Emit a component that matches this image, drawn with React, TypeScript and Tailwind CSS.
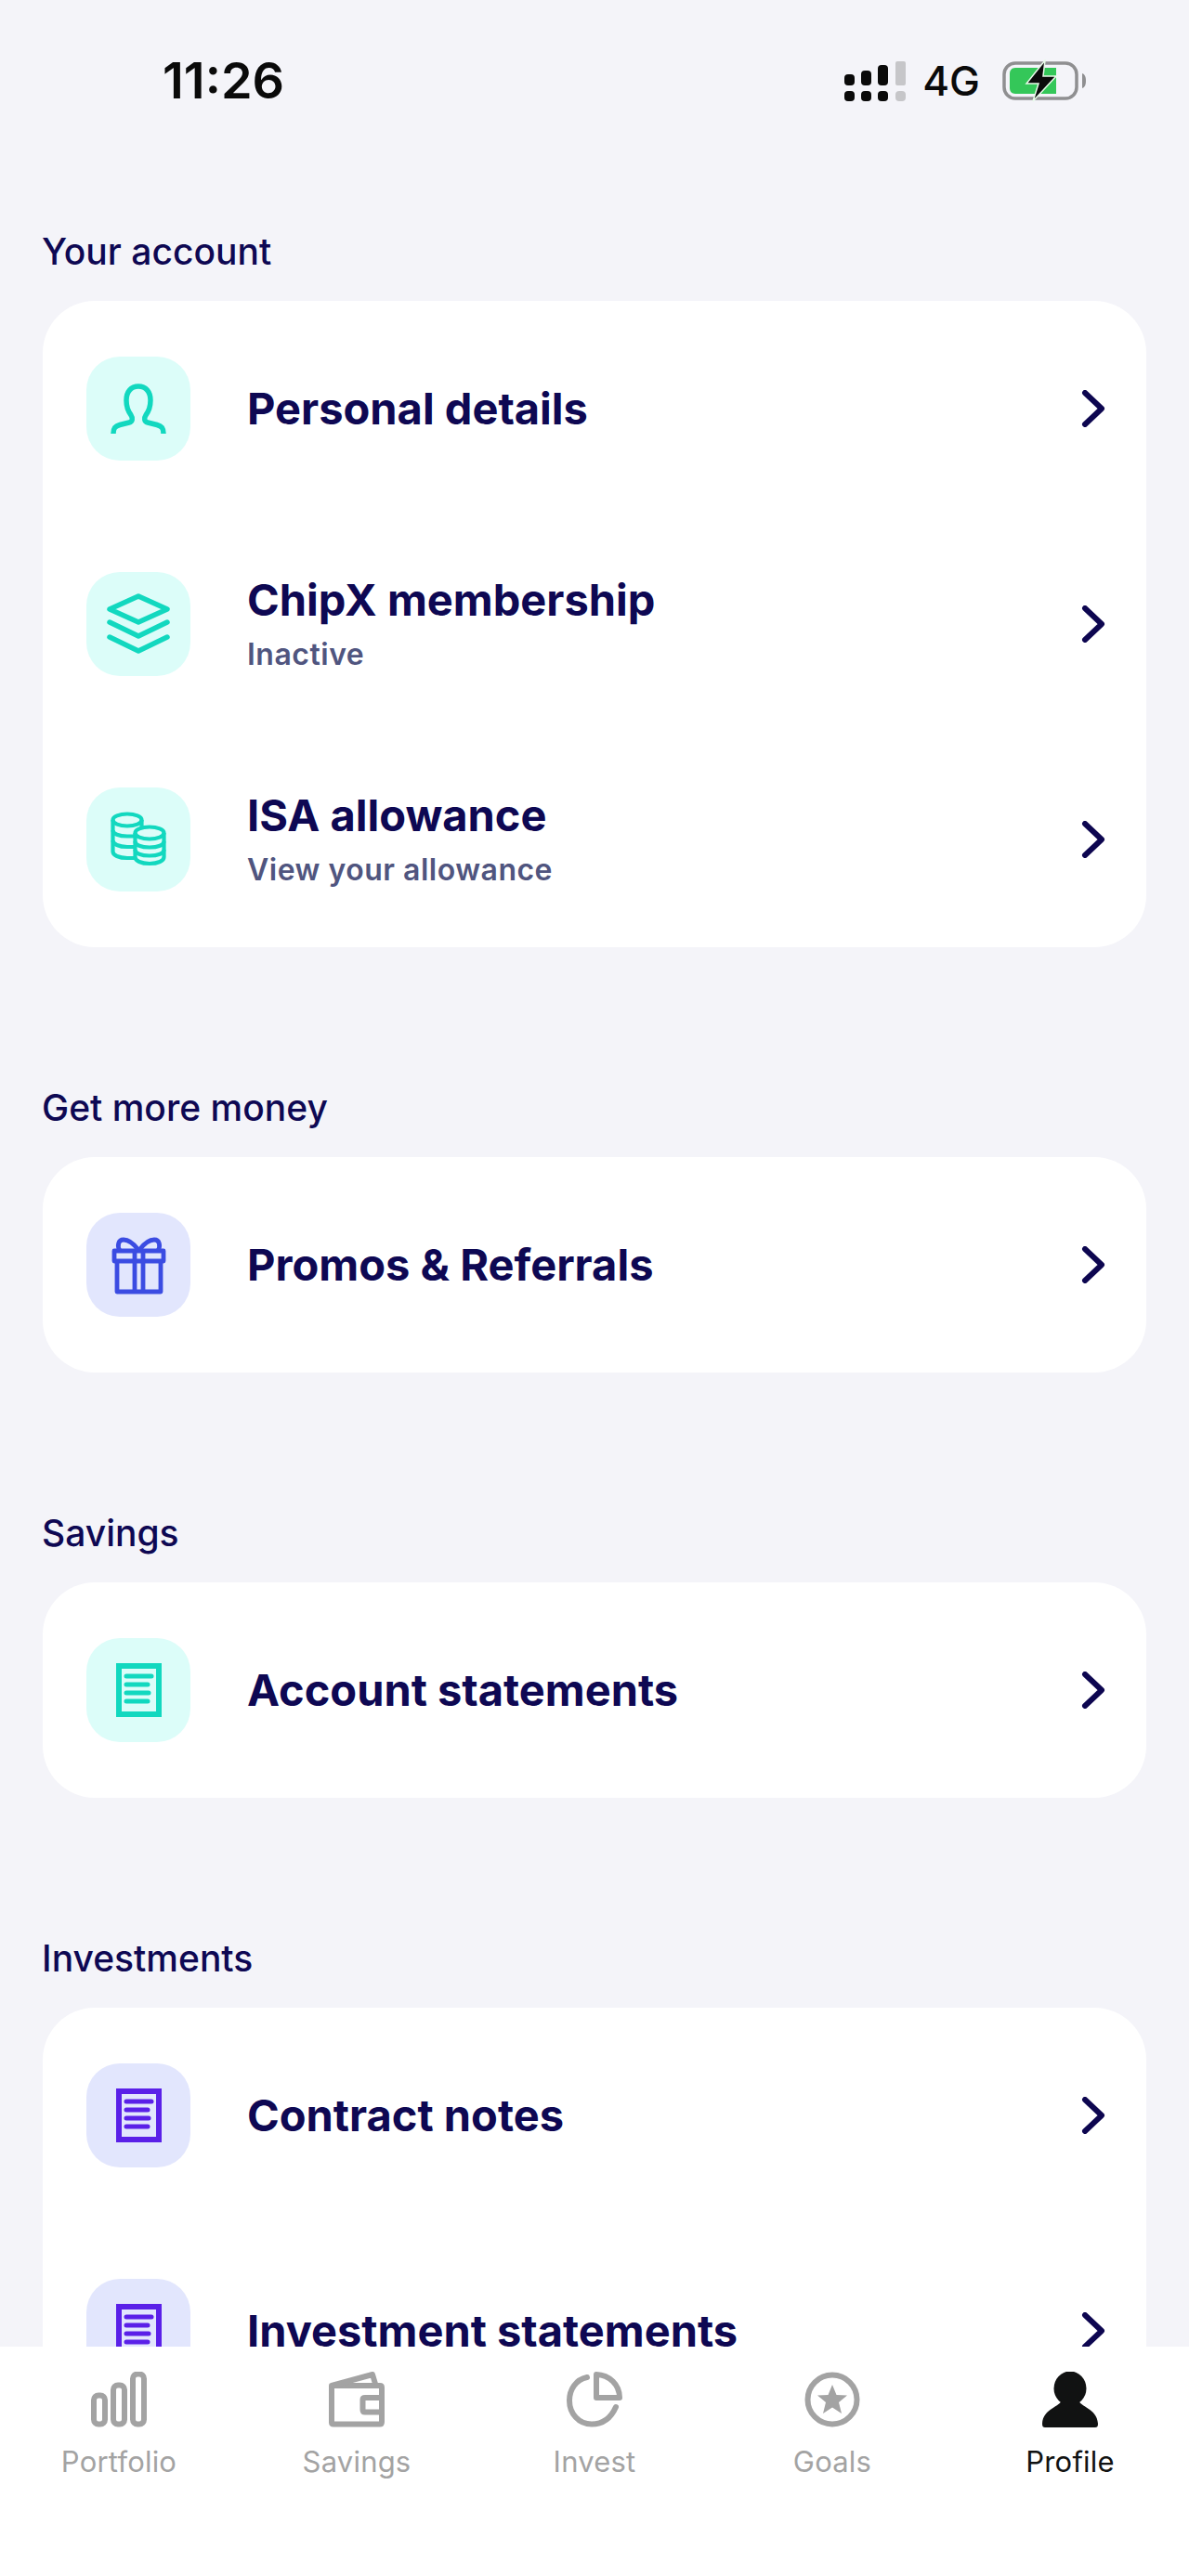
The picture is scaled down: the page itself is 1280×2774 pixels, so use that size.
import React from 'react';

const TEAL = '#12d8bf';
const INDIGO = '#3b4ce2';
const PURPLE = '#5a20e8';

function PersonIcon() {
    return (
        <svg viewBox="0 0 112 112" className="w-full h-full" fill="none" stroke={TEAL} strokeWidth="5.5">
            <path d="M29 83 C29 77 31 75 36 73.5 L46 71 C50 70 50 66 48 63 C45 59 43 54 43 47 C43 38 48 32 56 32 C64 32 69 38 69 47 C69 54 67 59 64 63 C62 66 62 70 66 71 L76 73.5 C81 75 83 77 83 83" />
        </svg>
    );
}

function LayersIcon() {
    return (
        <svg viewBox="0 0 112 112" className="w-full h-full" fill="none" stroke={TEAL} strokeWidth="5.5" strokeLinecap="round" strokeLinejoin="round">
            <path d="M56 26 L87 40 L56 54 L25 40 Z" />
            <path d="M25 54 L56 69 L87 54" />
            <path d="M25 70 L56 85 L87 70" />
        </svg>
    );
}

function CoinsIcon() {
    return (
        <svg viewBox="0 0 112 112" className="w-full h-full" fill="none" stroke={TEAL} strokeWidth="4.2">
            <ellipse cx="44" cy="35" rx="15.5" ry="6.5" />
            <path d="M28.5 35 V69 C28.5 73 35 76 44 76 H52" />
            <path d="M28.5 46 C28.5 50 35 52.5 44 52.5 H52" />
            <path d="M28.5 57 C28.5 61 35 64 44 64 H52" />
            <path d="M59.5 35 V43" />
            <ellipse cx="68" cy="49" rx="15.5" ry="6.5" />
            <path d="M52.5 49 V75 C52.5 79 59 82 68 82 C77 82 83.5 79 83.5 75 V49" />
            <path d="M52.5 58 C52.5 62 59 64.500 68 64.500 C77 64.500 83.5 62 83.5 58" />
            <path d="M52.5 67 C52.5 71 59 73.500 68 73.500 C77 73.500 83.5 71 83.5 67" />
        </svg>
    );
}

function GiftIcon() {
    return (
        <svg viewBox="0 0 112 112" className="w-full h-full" fill="none" stroke={INDIGO} strokeWidth="4.8" strokeLinejoin="round">
            <rect x="30" y="41" width="53" height="11" />
            <path d="M33 52 V85 H80 V52" />
            <path d="M52 41 V85 M61 41 V85" />
            <path d="M56 40 C50 32 45 29 40 29 C34 29 33 36 36 41" />
            <path d="M57 40 C63 32 68 29 73 29 C79 29 80 36 77 41" />
        </svg>
    );
}

function DocIcon({ color }: { color: string }) {
    return (
        <svg viewBox="0 0 112 112" className="w-full h-full" fill="none" stroke={color}>
            <rect x="35" y="30" width="43" height="52" strokeWidth="6" />
            <g strokeWidth="5" strokeLinecap="round">
                <path d="M43 41 H70" />
                <path d="M43 50 H66" />
                <path d="M43 59 H67" />
                <path d="M43 68 H66" />
            </g>
        </svg>
    );
}

function Chevron() {
    return (
        <svg viewBox="0 0 26 40" className="w-[26px] h-[40px] shrink-0" fill="none" stroke="#0d0650" strokeWidth="6" strokeLinecap="round" strokeLinejoin="round">
            <path d="M4 3 L22 20 L4 37" />
        </svg>
    );
}

function StatusIcons() {
    return (
        <div className="flex items-center">
            <svg viewBox="0 0 66 44" className="w-[66px] h-[44px]" fill="#0a0a0a">
                <rect x="0" y="15" width="11" height="12" rx="4" />
                <rect x="18" y="11" width="11" height="16" rx="4" />
                <rect x="36" y="5" width="11" height="22" rx="4" />
                <rect x="55" y="1" width="11" height="26" rx="2" fill="#c6c6c9" />
                <rect x="0" y="33" width="11" height="11" rx="4" />
                <rect x="18" y="33" width="11" height="11" rx="4" />
                <rect x="36" y="33" width="11" height="11" rx="4" />
                <rect x="55" y="33" width="11" height="11" rx="4" fill="#c6c6c9" />
            </svg>
            <span className="ml-[18px] text-[44px] leading-none font-medium text-[#0a0a0a]">4G</span>
            <svg viewBox="0 0 92 46" className="ml-[24px] w-[92px] h-[46px]" fill="none">
                <rect x="2" y="4" width="78" height="38" rx="12" stroke="#8f8f91" strokeWidth="3.500" />
                <path d="M14 9 H58 V37 H14 C10 37 8 34 8 31 V15 C8 12 10 9 14 9 Z" fill="#34c759" />
                <path d="M86 15 C89 16 90 19 90 23 C90 27 89 30 86 31 Z" fill="#8f8f91" />
                <path d="M46 1 L26 26 H39 L33 45 L58 18 H44 Z" fill="#0a0a0a" stroke="#e8fbe9" strokeWidth="1.500" />
            </svg>
        </div>
    );
}

interface Item {
    title: string;
    sub?: string;
    icon: React.ReactNode;
    tone: 'teal' | 'indigo';
}

const sections: { heading: string; items: Item[] }[] = [
    {
        heading: 'Your account',
        items: [
            { title: 'Personal details', icon: <PersonIcon />, tone: 'teal' },
            { title: 'ChipX membership', sub: 'Inactive', icon: <LayersIcon />, tone: 'teal' },
            { title: 'ISA allowance', sub: 'View your allowance', icon: <CoinsIcon />, tone: 'teal' },
        ],
    },
    {
        heading: 'Get more money',
        items: [{ title: 'Promos & Referrals', icon: <GiftIcon />, tone: 'indigo' }],
    },
    {
        heading: 'Savings',
        items: [{ title: 'Account statements', icon: <DocIcon color={TEAL} />, tone: 'teal' }],
    },
    {
        heading: 'Investments',
        items: [
            { title: 'Contract notes', icon: <DocIcon color={PURPLE} />, tone: 'indigo' },
            { title: 'Investment statements', icon: <DocIcon color={PURPLE} />, tone: 'indigo' },
        ],
    },
];

function NavIcon({ name }: { name: string }) {
    if (name === 'Portfolio') {
        return (
            <svg viewBox="0 0 60 60" className="w-[60px] h-[60px]" fill="none" stroke="#a3a3a3" strokeWidth="6">
                <rect x="3" y="25.500" width="12" height="31" rx="5" />
                <rect x="24" y="14.500" width="12" height="42" rx="5" />
                <rect x="45" y="2.500" width="12" height="54" rx="5" />
            </svg>
        );
    }
    if (name === 'Savings') {
        return (
            <svg viewBox="0 0 60 60" className="w-[60px] h-[60px]" fill="none" stroke="#a3a3a3" strokeWidth="6" strokeLinejoin="round">
                <path d="M3 15 H55 C56.500 15 57 15.500 57 17 V54 C57 56 56.500 56.500 55 56.500 H5 C3.500 56.500 3 56 3 54.500 Z" />
                <path d="M3 15 L47 3 L50 13" />
                <path d="M57 28 H39 C37 28 36.500 29 36.500 30 V41 C36.500 43 37 43.500 39 43.500 H57" />
            </svg>
        );
    }
    if (name === 'Invest') {
        return (
            <svg viewBox="0 0 60 60" className="w-[60px] h-[60px]" fill="none" stroke="#a3a3a3" strokeWidth="6" strokeLinecap="round" strokeLinejoin="round">
                <path d="M32 3 V28 H57 C57 14 46 3.500 32 3 Z" />
                <path d="M22 6 C10 8.500 3 19 3 31 C3 45 13 56.500 27 56.500 C41 56.500 49 47 53 38" />
            </svg>
        );
    }
    if (name === 'Goals') {
        return (
            <svg viewBox="0 0 60 60" className="w-[60px] h-[60px]" fill="none">
                <circle cx="30" cy="30" r="26.500" stroke="#a3a3a3" strokeWidth="6" />
                <path d="M30 14 L34.500 25 L46 25.500 L37 33 L40 45 L30 38.500 L20 45 L23 33 L14 25.500 L25.500 25 Z" fill="#a3a3a3" />
            </svg>
        );
    }
    return (
        <svg viewBox="0 0 60 60" className="w-[60px] h-[60px]" fill="#111212">
            <ellipse cx="30" cy="18" rx="17.500" ry="18.500" />
            <path d="M21 30 C20 38 1 39 0 56 C0 59 1 60 3 60 H57 C59 60 60 59 60 56 C59 39 40 38 39 30 Z" />
        </svg>
    );
}

const tabs = ['Portfolio', 'Savings', 'Invest', 'Goals', 'Profile'];

export default function App() {
    return (
        <div className="flex flex-col h-[2774px] overflow-hidden bg-[#f4f4f9] font-['Inter',sans-serif]">
            <div className="flex-1 min-h-0 overflow-hidden">
                {/* Status bar */}
                <div className="flex items-center justify-between h-[174px] pl-[175px] pr-[109px]">
                    <span className="text-[54px] leading-none font-semibold text-[#0a0a0a]">11:26</span>
                    <StatusIcons />
                </div>

                <div className="pt-[71px] px-[46px] flex flex-col gap-[147px]">
                    {sections.map((section) => (
                        <section key={section.heading}>
                            <h2 className="text-[39px] leading-[51px] mb-[28px] font-medium text-[#0e0853] -ml-px">{section.heading}</h2>
                            <div className="flex flex-col gap-[120px] py-[60px] pl-[47px] pr-[44px] bg-white rounded-[56px]">
                                {section.items.map((item) => (
                                    <div key={item.title} className="flex items-center h-[112px]">
                                        <div className={`w-[112px] h-[112px] shrink-0 rounded-[36px] ${item.tone === 'teal' ? 'bg-[#dcfdf9]' : 'bg-[#e2e6fd]'}`}>
                                            {item.icon}
                                        </div>
                                        <div className="flex-1 ml-[61px]">
                                            <div className="text-[47px] leading-[66px] font-bold text-[#0e0853]">{item.title}</div>
                                            {item.sub && (
                                                <div className="text-[32px] leading-[52px] font-semibold tracking-[0.5px] text-[#50557f]">{item.sub}</div>
                                            )}
                                        </div>
                                        <Chevron />
                                    </div>
                                ))}
                            </div>
                        </section>
                    ))}
                </div>
            </div>

            {/* Tab bar */}
            <nav className="grid grid-cols-5 h-[247px] shrink-0 bg-white pt-[27px]">
                {tabs.map((tab) => (
                    <div key={tab} className="flex flex-col items-center">
                        <NavIcon name={tab} />
                        <span className={`mt-[17px] text-[31px] leading-[40px] tracking-[0.2px] ${tab === 'Profile' ? 'text-[#111212]' : 'text-[#a3a3a3]'}`}>{tab}</span>
                    </div>
                ))}
            </nav>
        </div>
    );
}
